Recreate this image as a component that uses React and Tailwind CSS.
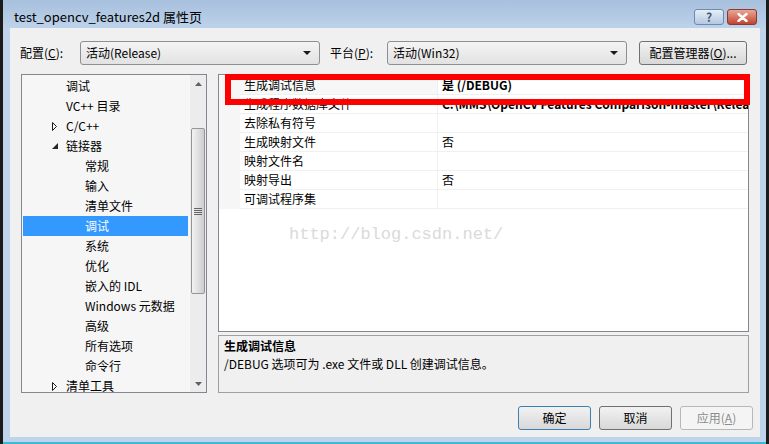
import React from "react";

const treeItems = [
  { label: "调试", level: 1 },
  { label: "VC++ 目录", level: 1 },
  { label: "C/C++", level: 1, arrow: "closed" },
  { label: "链接器", level: 1, arrow: "open" },
  { label: "常规", level: 2 },
  { label: "输入", level: 2 },
  { label: "清单文件", level: 2 },
  { label: "调试", level: 2, selected: true },
  { label: "系统", level: 2 },
  { label: "优化", level: 2 },
  { label: "嵌入的 IDL", level: 2 },
  { label: "Windows 元数据", level: 2 },
  { label: "高级", level: 2 },
  { label: "所有选项", level: 2 },
  { label: "命令行", level: 2 },
  { label: "清单工具", level: 1, arrow: "closed" },
];

const properties = [
  { name: "生成调试信息", value: "是 (/DEBUG)", active: true },
  {
    name: "生成程序数据库文件",
    value: "C:\\MMS\\OpenCV Features Comparison-master\\Release\\test_opencv_features2d.pdb",
    bold: true,
  },
  { name: "去除私有符号", value: "" },
  { name: "生成映射文件", value: "否" },
  { name: "映射文件名", value: "" },
  { name: "映射导出", value: "否" },
  { name: "可调试程序集", value: "" },
];

function DropArrow() {
  return (
    <svg width="8" height="4" viewBox="0 0 8 4" className="shrink-0">
      <path d="M0 0 H8 L4 4 Z" fill="#1a1a1a" />
    </svg>
  );
}

function Combo({ text, width }) {
  return (
    <div
      className={`${width} h-[24px] flex items-center justify-between pl-[5px] pr-[8px] rounded-[3px] border border-[#8e8f8f] bg-linear-to-b from-[#f4f4f4] to-[#e2e2e2]`}
    >
      <span>{text}</span>
      <DropArrow />
    </div>
  );
}

function TreeArrow({ type }) {
  if (type === "open") {
    return (
      <svg width="7" height="7" viewBox="0 0 7 7">
        <path d="M6 0 V6 H0 Z" fill="#262626" />
      </svg>
    );
  }
  return (
    <svg width="6" height="9" viewBox="0 0 6 9">
      <path d="M0.5 0.5 L4.5 4.5 L0.5 8.5 Z" fill="none" stroke="#1a1a1a" strokeWidth="1" />
    </svg>
  );
}

function TreeRow({ item }) {
  return (
    <div
      className={`h-[20px] flex items-center whitespace-nowrap ${
        item.selected ? "bg-[#3399ff] text-white" : "text-black"
      } ${item.level === 1 ? "pl-[29px]" : "pl-[62px]"}`}
    >
      {item.level === 1 && (
        <span className="w-[14px] flex items-center">
          {item.arrow && <TreeArrow type={item.arrow} />}
        </span>
      )}
      <span>{item.label}</span>
    </div>
  );
}

function ScrollArrow({ up }) {
  return (
    <div className="h-[17px] flex items-center justify-center">
      <svg width="7" height="4" viewBox="0 0 7 4">
        {up ? <path d="M0 4 H7 L3.5 0 Z" fill="#606060" /> : <path d="M0 0 H7 L3.5 4 Z" fill="#606060" />}
      </svg>
    </div>
  );
}

function Button({ children, variant }) {
  const styles = {
    default: "border-[#3c7fb1] text-black bg-linear-to-b from-[#f2f2f2] to-[#d8d8d8]",
    normal: "border-[#707070] text-black bg-linear-to-b from-[#f2f2f2] to-[#d8d8d8]",
    disabled: "border-[#b5b8bb] text-[#8c8c8c] bg-[#f4f4f4]",
  };
  return (
    <div
      className={`w-[73px] h-[24px] flex items-center justify-center rounded-[3px] border ${styles[variant]}`}
    >
      {children}
    </div>
  );
}

export default function App() {
  return (
    <div className="w-[769px] h-[444px] bg-[#1b1b1b] px-[3px] overflow-hidden font-['Noto_Sans_CJK_SC','Noto_Sans',sans-serif] text-[12px] leading-[18px]">
      <div className="h-[444px] flex flex-col bg-[#bfd4eb]">
        {/* title bar */}
        <div className="h-[28px] flex items-start justify-between bg-linear-to-b from-[#a7c0dd] to-[#bdd2ea]">
          <div className="pl-[11px] pt-[7px] text-[13px] leading-[20px] text-black">
            test_opencv_features2d 属性页
          </div>
          <div className="flex gap-[3px] pt-[9px] pr-[9px]">
            <div className="w-[30px] h-[16px] rounded-[3px] border border-[#6f8bab] bg-linear-to-b from-[#e6eef8] to-[#b3c8e2] flex items-center justify-center text-[12px] leading-none font-bold text-[#4a5a6e]">
              ?
            </div>
            <div className="w-[30px] h-[16px] rounded-[3px] border border-[#8b3a30] bg-linear-to-b from-[#e8a698] to-[#c0432e] flex items-center justify-center">
              <svg width="11" height="9" viewBox="0 0 11 9">
                <path d="M1.5 1 L9.5 8 M9.5 1 L1.5 8" stroke="#ffffff" strokeWidth="2.4" strokeLinecap="round" />
              </svg>
            </div>
          </div>
        </div>

        {/* client area */}
        <div className="ml-[7px] mr-[6px] h-[409px] bg-[#f0f0f0] flex flex-col text-black">
          {/* config row */}
          <div className="mt-[13px] h-[24px] flex items-center">
            <div className="w-[70px] pl-[10px]">
              配置(<span className="underline">C</span>):
            </div>
            <Combo text="活动(Release)" width="w-[240px]" />
            <div className="w-[67px] pl-[10px]">
              平台(<span className="underline">P</span>):
            </div>
            <Combo text="活动(Win32)" width="w-[240px]" />
            <div className="ml-[12px] w-[108px] h-[24px] flex items-center justify-center rounded-[3px] border border-[#707070] bg-linear-to-b from-[#f2f2f2] to-[#d8d8d8]">
              配置管理器(<span className="underline">O</span>)...
            </div>
          </div>

          {/* main */}
          <div className="mt-[9px] h-[319px] flex">
            {/* tree */}
            <div className="ml-[11px] w-[186px] h-full border border-[#828790] bg-[#f6f6f6] flex overflow-hidden">
              <div className="flex-1 px-[1px] pt-[1px] overflow-hidden">
                {treeItems.map((item, i) => (
                  <TreeRow key={i} item={item} />
                ))}
              </div>
              <div className="w-[17px] h-full flex flex-col bg-[#ececec] border-l border-[#f8f8f8]">
                <ScrollArrow up />
                <div className="h-[36px]" />
                <div className="h-[166px] mx-[1px] rounded-[2px] border border-[#959595] bg-linear-to-r from-[#f3f3f3] via-[#e0e0e0] to-[#cdcdcd] flex flex-col items-center justify-center gap-[1px]">
                  <div className="w-[8px] h-[1px] bg-[#666]" />
                  <div className="w-[8px] h-[1px] bg-[#666]" />
                  <div className="w-[8px] h-[1px] bg-[#666]" />
                  <div className="w-[8px] h-[1px] bg-[#666]" />
                </div>
                <div className="flex-1" />
                <ScrollArrow />
              </div>
            </div>

            {/* right panel */}
            <div className="ml-[11px] w-[531px] h-full flex flex-col relative">
              <div className="h-[258px] border border-[#828790] bg-white pt-[1px] overflow-hidden relative">
                {properties.map((p, i) => (
                  <div key={i} className="h-[19px] flex">
                    <div className="w-[21px] bg-[#f6f6f6]" />
                    <div
                      className={`w-[198px] pl-[4px] border-b border-r border-[#f0f0f0] flex items-center whitespace-nowrap overflow-hidden ${
                        p.active ? "bg-[#f7f7f7]" : ""
                      }`}
                    >
                      {p.name}
                    </div>
                    <div
                      className={`flex-1 pl-[4px] border-b border-[#f0f0f0] flex items-center whitespace-nowrap overflow-hidden ${
                        p.active || p.bold ? "font-bold" : ""
                      }`}
                    >
                      {p.value}
                    </div>
                  </div>
                ))}
                <div className="absolute left-[70px] top-[150px] text-[17px] leading-[20px] text-[#dadada] font-['Liberation_Mono',monospace]">
                  http://blog.csdn.net/
                </div>
              </div>

              <div className="mt-[3px] h-[58px] border border-[#a0a0a0] bg-[#f0f0f0] pl-[5px] pt-[1px]">
                <div className="font-bold">生成调试信息</div>
                <div>/DEBUG 选项可为 .exe 文件或 DLL 创建调试信息。</div>
              </div>

              {/* red highlight overlay */}
              <div className="absolute left-[7px] top-0 w-[525px] h-[31px] border-[6px] border-[#ff0000]" />
            </div>
          </div>

          {/* buttons */}
          <div className="mt-[13px] flex justify-end gap-[8px] pr-[7px]">
            <Button variant="default">确定</Button>
            <Button variant="normal">取消</Button>
            <Button variant="disabled">
              应用(<span className="underline">A</span>)
            </Button>
          </div>
        </div>

        {/* bottom frame */}
        <div className="flex-1" />
        <div className="h-[2px] bg-[#3bb8da]" />
      </div>
    </div>
  );
}
